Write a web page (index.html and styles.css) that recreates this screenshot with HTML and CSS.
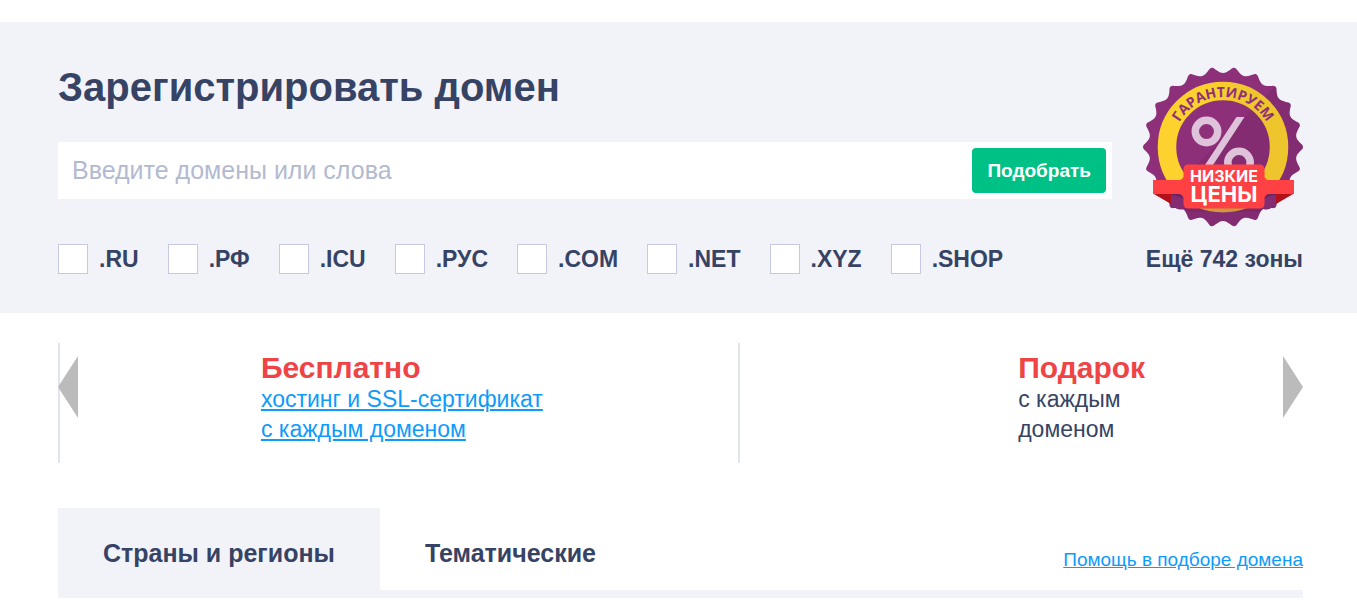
FILE: index.html
```html
<!DOCTYPE html>
<html lang="ru">
<head>
<meta charset="utf-8">
<meta name="viewport" content="width=device-width, initial-scale=1">
<title>Зарегистрировать домен</title>
<link rel="stylesheet" href="styles.css">
</head>
<body>
<section class="hero">
  <div class="hero-top">
    <div class="hero-main">
      <h1 class="hero-title">Зарегистрировать домен</h1>
      <form class="search">
        <input class="search-input" type="text" placeholder="Введите домены или слова" aria-label="Введите домены или слова">
        <button class="search-button" type="button">Подобрать</button>
      </form>
    </div>
    <svg class="badge" viewBox="0 0 160 160" role="img" aria-label="Гарантируем низкие цены">
      <defs>
        <linearGradient id="purple" gradientUnits="userSpaceOnUse" x1="0" y1="0" x2="160" y2="160">
          <stop offset="0.475" stop-color="#8e3079"/><stop offset="0.475" stop-color="#832c72"/>
        </linearGradient>
        <linearGradient id="yellow" gradientUnits="userSpaceOnUse" x1="24" y1="0" x2="136" y2="0">
          <stop offset="0.3" stop-color="#fdd22e"/><stop offset="0.8" stop-color="#eec52d"/>
        </linearGradient>
        <path id="tooth" d="M50 -7.500 L73.200 -10.700 C73.500 -8.200 75 -6.500 76.800 -4.500 C78.800 -2.400 80 -1.800 80 0 C80 1.800 78.800 2.400 76.800 4.500 C75 6.500 73.500 8.200 73.200 10.700 L50 7.500Z"/>
        <clipPath id="seal">
          <circle cx="80" cy="80" r="73.500"/>
          <use href="#tooth" transform="translate(80 80)"/>
          <use href="#tooth" transform="translate(80 80) rotate(16.364)"/>
          <use href="#tooth" transform="translate(80 80) rotate(32.727)"/>
          <use href="#tooth" transform="translate(80 80) rotate(49.091)"/>
          <use href="#tooth" transform="translate(80 80) rotate(65.455)"/>
          <use href="#tooth" transform="translate(80 80) rotate(81.818)"/>
          <use href="#tooth" transform="translate(80 80) rotate(98.182)"/>
          <use href="#tooth" transform="translate(80 80) rotate(114.545)"/>
          <use href="#tooth" transform="translate(80 80) rotate(130.909)"/>
          <use href="#tooth" transform="translate(80 80) rotate(147.273)"/>
          <use href="#tooth" transform="translate(80 80) rotate(163.636)"/>
          <use href="#tooth" transform="translate(80 80) rotate(180)"/>
          <use href="#tooth" transform="translate(80 80) rotate(196.364)"/>
          <use href="#tooth" transform="translate(80 80) rotate(212.727)"/>
          <use href="#tooth" transform="translate(80 80) rotate(229.091)"/>
          <use href="#tooth" transform="translate(80 80) rotate(245.455)"/>
          <use href="#tooth" transform="translate(80 80) rotate(261.818)"/>
          <use href="#tooth" transform="translate(80 80) rotate(278.182)"/>
          <use href="#tooth" transform="translate(80 80) rotate(294.545)"/>
          <use href="#tooth" transform="translate(80 80) rotate(310.909)"/>
          <use href="#tooth" transform="translate(80 80) rotate(327.273)"/>
          <use href="#tooth" transform="translate(80 80) rotate(343.636)"/>
        </clipPath>
        <path id="arc" d="M30 80 A50 50 0 0 1 130 80"/>
      </defs>
      <rect width="160" height="160" fill="url(#purple)" clip-path="url(#seal)"/>
      <circle cx="80" cy="80" r="56" fill="none" stroke="url(#yellow)" stroke-width="18.500"/>
      <text class="badge-arc"><textPath href="#arc" startOffset="50%">ГАРАНТИРУЕМ</textPath></text>
      <g fill="none" stroke="#dfc3da">
        <circle cx="63.500" cy="64.500" r="11.200" stroke-width="7.500"/>
        <circle cx="96" cy="95.500" r="11.200" stroke-width="7.500"/>
      </g>
      <path d="M93.500 50H101.500L68 101H60Z" fill="#dfc3da"/>
      <path d="M24 127H41V142Q34 144 31 139Q29 136 26 136Z M137 127H120V142Q127 144 130 139Q132 136 135 136Z" fill="#832c72"/>
      <path d="M10 126.500H28V137Z M151 126.500H133V137Z" fill="#b4101c"/>
      <path d="M28 126H42V133Q38 129 28 128Z M120 126H133V128Q125 128 120 133Z" fill="#6c235f"/>
      <path d="M42 138H120V141Q119 145 115 145H47Q43 145 42 141Z" fill="#6c235f" opacity=".3"/>
      <path d="M10 113H36Q39 113 40.500 110V102Q41 97.500 45 97.500H117Q121 97.500 121.500 102V110Q123 113 126 113H151V127H126Q123 127 121.500 131V137Q121 141.500 117 141.500H45Q41 141.500 40.500 137V131Q39 127 36 127H10Z" fill="#ff4143"/>
      <text class="badge-low" x="81" y="115">НИЗКИЕ</text>
      <text class="badge-price" x="81" y="135">ЦЕНЫ</text>
    </svg>
  </div>
  <div class="zones">
    <label class="zone"><input class="zone-box" type="checkbox">.RU</label>
    <label class="zone"><input class="zone-box" type="checkbox">.РФ</label>
    <label class="zone"><input class="zone-box" type="checkbox">.ICU</label>
    <label class="zone"><input class="zone-box" type="checkbox">.РУС</label>
    <label class="zone"><input class="zone-box" type="checkbox">.COM</label>
    <label class="zone"><input class="zone-box" type="checkbox">.NET</label>
    <label class="zone"><input class="zone-box" type="checkbox">.XYZ</label>
    <label class="zone"><input class="zone-box" type="checkbox">.SHOP</label>
    <a class="zones-more" href="#zones">Ещё 742 зоны</a>
  </div>
</section>

<section class="slider">
  <div class="slides">
    <article class="slide">
      <div>
        <h2 class="slide-title">Бесплатно</h2>
        <a class="slide-text slide-link" href="#ssl">хостинг и SSL-сертификат<br>с каждым доменом</a>
      </div>
    </article>
    <article class="slide">
      <div>
        <h2 class="slide-title">Подарок</h2>
        <p class="slide-text">с каждым<br>доменом</p>
      </div>
    </article>
  </div>
  <button class="arrow arrow-prev" type="button" aria-label="Назад"><svg class="arrow-icon" viewBox="0 0 20 62"><path d="M20 0V62L0 31Z"/></svg></button>
  <button class="arrow arrow-next" type="button" aria-label="Вперёд"><svg class="arrow-icon" viewBox="0 0 20 62"><path d="M0 0V62L20 31Z"/></svg></button>
</section>

<section class="catalog">
  <nav class="tabs">
    <button class="tab tab-active" type="button">Страны и регионы</button>
    <button class="tab" type="button">Тематические</button>
    <a class="help" href="#help">Помощь в подборе домена</a>
  </nav>
</section>
</body>
</html>
```
FILE: styles.css
```css
* { box-sizing: border-box; }

body {
  margin: 0;
  padding: 22px 0 10px;
  background: #fff;
  color: #364364;
  font-family: "Liberation Sans", Arial, sans-serif;
}

h1, h2, p { margin: 0; }

button { font-family: inherit; cursor: pointer; }

.hero {
  padding: 40px 54px 39px 58px;
  background: #f2f3f9;
}

.hero-top {
  display: flex;
  align-items: flex-start;
  gap: 31px;
}

.hero-main { flex: 1; }

.hero-title {
  font-size: 40px;
  line-height: 50px;
}

.search {
  display: flex;
  margin-top: 30px;
  padding: 6px;
  background: #fff;
}

.search-input {
  flex: 1;
  min-width: 0;
  padding: 0 8px;
  border: 0;
  outline: 0;
  background: none;
  color: inherit;
  font: 25px "Liberation Sans", Arial, sans-serif;
}

.search-input::placeholder { color: #b3bad0; opacity: 1; }

.search-button {
  height: 45px;
  padding: 0 15px;
  border: 0;
  border-radius: 4px;
  background: #00c185;
  color: #fff;
  font-size: 19px;
  font-weight: 700;
}

.badge {
  flex: none;
  width: 160px;
  height: 160px;
  margin-top: 5px;
}

.badge text {
  font-family: Inter, sans-serif;
  font-weight: 700;
  text-anchor: middle;
  fill: #fff;
}

.badge .badge-arc {
  font-family: "Open Sans", sans-serif;
  font-size: 14px;
  fill: #8e3079;
}

.badge .badge-low { font-size: 16px; }
.badge .badge-price { font-size: 22px; }

.zones {
  display: flex;
  align-items: center;
  gap: 29px;
  margin-top: 17px;
  font-size: 23px;
  font-weight: 700;
  line-height: 30px;
}

.zone {
  display: flex;
  align-items: center;
  gap: 11px;
}

.zone-box {
  appearance: none;
  width: 30px;
  height: 30px;
  margin: 0;
  border: 1px solid #c6cae0;
  background: #fff;
}

.zone-box:checked { background: #00c185; }

.zones-more {
  margin-left: auto;
  color: inherit;
  text-decoration: none;
}

.slider {
  position: relative;
  margin: 30px 54px 0 58px;
}

.slides {
  display: flex;
  overflow: hidden;
}

.slide {
  display: flex;
  flex: 0 0 54.6%;
  justify-content: center;
  min-height: 120px;
  padding: 8px 0 0 6px;
  border-left: 2px solid #e1e4ef;
}

.slide-title {
  color: #ef4446;
  font-size: 30px;
  line-height: 33px;
}

.slide-text {
  display: block;
  font-size: 23px;
  line-height: 30px;
}

.slide-link { color: #0e9bfb; }

.arrow {
  position: absolute;
  top: 13px;
  padding: 0;
  border: 0;
  background: none;
}

.arrow-prev { left: 0; }
.arrow-next { right: 0; }

.arrow-icon {
  display: block;
  width: 20px;
  height: 62px;
  fill: #bbb;
}

.catalog { margin: 45px 54px 0 58px; }

.tabs {
  display: flex;
  align-items: center;
  border-bottom: 8px solid #f2f3f9;
}

.tab {
  padding: 30px 45px 22px;
  border: 0;
  background: none;
  color: inherit;
  font-size: 25px;
  font-weight: 700;
  line-height: 30px;
}

.tab-active { background: #f2f3f9; }

.help {
  margin: 22px 0 0 auto;
  color: #0e9bfb;
  font-size: 19px;
  line-height: 24px;
}
```
